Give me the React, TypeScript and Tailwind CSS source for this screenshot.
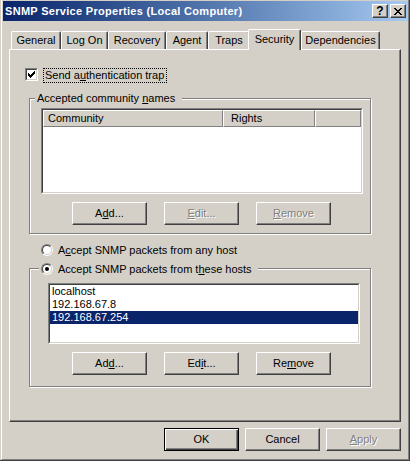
import React from 'react';

type BtnProps = {
  children: React.ReactNode;
  disabled?: boolean;
  isDefault?: boolean;
};

function PushButton({ children, disabled = false, isDefault = false }: BtnProps) {
  const edge = isDefault
    ? 'border border-black shadow-[inset_1px_1px_0_#ffffff,inset_-1px_-1px_0_#404040,inset_-2px_-2px_0_#808080]'
    : 'border border-t-white border-l-white border-r-[#404040] border-b-[#404040] shadow-[inset_-1px_-1px_0_#808080]';
  const text = disabled ? 'text-[#808080] [text-shadow:1px_1px_0_#ffffff]' : 'text-black';
  return (
    <div className={`w-[75px] h-[23px] flex items-center justify-center bg-[#d4d0c8] ${edge} ${text}`}>
      <span>{children}</span>
    </div>
  );
}

function CaptionButton({ children }: { children: React.ReactNode }) {
  return (
    <div className="w-[16px] h-[14px] flex items-center justify-center bg-[#d4d0c8] border border-t-white border-l-white border-r-[#404040] border-b-[#404040] shadow-[inset_-1px_-1px_0_#808080]">
      {children}
    </div>
  );
}

function CloseGlyph() {
  // 8x7 pixel cross like the Marlett glyph
  const px: [number, number][] = [
    [0, 0], [1, 0], [6, 0], [7, 0],
    [1, 1], [2, 1], [5, 1], [6, 1],
    [2, 2], [3, 2], [4, 2], [5, 2],
    [3, 3], [4, 3],
    [2, 4], [3, 4], [4, 4], [5, 4],
    [1, 5], [2, 5], [5, 5], [6, 5],
    [0, 6], [1, 6], [6, 6], [7, 6],
  ];
  return (
    <svg width="8" height="7" viewBox="0 0 8 7" shapeRendering="crispEdges">
      {px.map(([x, y]) => (
        <rect key={`${x}-${y}`} x={x} y={y} width="1" height="1" fill="#000" />
      ))}
    </svg>
  );
}

function TitleBar() {
  return (
    <div className="h-[20px] flex items-center pl-[2px] pr-[2px] bg-linear-to-r from-[#0a246a] to-[#a6caf0]">
      <div className="flex-1 text-white font-bold text-[11px] leading-[13px] tracking-[0.3px] whitespace-nowrap">
        SNMP Service Properties (Local Computer)
      </div>
      <div className="flex gap-[2px]">
        <CaptionButton>
          <span className="font-bold text-[12px] leading-[12px] -mt-[1px]">?</span>
        </CaptionButton>
        <CaptionButton>
          <CloseGlyph />
        </CaptionButton>
      </div>
    </div>
  );
}

const tabs = [
  { label: 'General', w: 'w-[50px]' },
  { label: 'Log On', w: 'w-[47px]' },
  { label: 'Recovery', w: 'w-[58px]' },
  { label: 'Agent', w: 'w-[42px]' },
  { label: 'Traps', w: 'w-[42px]' },
  { label: 'Security', w: 'w-[53px]', selected: true },
  { label: 'Dependencies', w: 'w-[79px]' },
];

function TabStrip() {
  return (
    <div className="h-[20px] mt-[8px] pl-[2px] flex items-end">
      {tabs.map((t) =>
        t.selected ? (
          <div
            key={t.label}
            className={`${t.w} h-[21px] -ml-[2px] -mb-[1px] pb-[2px] relative z-10 flex items-center justify-center bg-[#d4d0c8] rounded-t-[2px] border-l border-t border-r border-l-white border-t-white border-r-[#404040] shadow-[inset_-1px_0_0_#808080]`}
          >
            {t.label}
          </div>
        ) : (
          <div
            key={t.label}
            className={`${t.w} h-[18px] flex items-center justify-center rounded-t-[2px] border-l border-t border-r border-l-white border-t-white border-r-[#404040] shadow-[inset_-1px_0_0_#808080]`}
          >
            {t.label}
          </div>
        )
      )}
    </div>
  );
}

function CheckBox() {
  const cols: [number, number][] = [
    [0, 2], [1, 3], [2, 4], [3, 3], [4, 2], [5, 1], [6, 0],
  ];
  return (
    <div className="w-[13px] h-[13px] border border-t-[#808080] border-l-[#808080] border-r-white border-b-white">
      <div className="w-full h-full bg-white border border-t-[#404040] border-l-[#404040] border-r-[#d4d0c8] border-b-[#d4d0c8] flex items-center justify-center">
        <svg width="7" height="7" viewBox="0 0 7 7" shapeRendering="crispEdges">
          {cols.map(([x, y]) => (
            <rect key={x} x={x} y={y} width="1" height="3" fill="#000" />
          ))}
        </svg>
      </div>
    </div>
  );
}

function Radio({ checked = false }: { checked?: boolean }) {
  return (
    <div className="w-[12px] h-[12px] rounded-full border border-t-[#808080] border-l-[#808080] border-r-white border-b-white">
      <div className="w-full h-full rounded-full bg-white border border-t-[#404040] border-l-[#404040] border-r-[#d4d0c8] border-b-[#d4d0c8] flex items-center justify-center">
        {checked && <div className="w-[4px] h-[4px] rounded-full bg-black" />}
      </div>
    </div>
  );
}

function CommunityList() {
  return (
    <div className="ml-[11px] mt-[9px] w-[322px] h-[86px] border border-t-[#808080] border-l-[#808080] border-r-white border-b-white">
      <div className="w-full h-full bg-white border border-t-[#404040] border-l-[#404040] border-r-[#d4d0c8] border-b-[#d4d0c8]">
        <div className="h-[17px] flex bg-[#d4d0c8]">
          <div className="w-[180px] pl-[4px] flex items-center border border-t-white border-l-white border-r-[#808080] border-b-[#808080]">
            Community
          </div>
          <div className="w-[92px] pl-[7px] flex items-center border border-t-white border-l-white border-r-[#808080] border-b-[#808080]">
            Rights
          </div>
          <div className="flex-1 border border-t-white border-l-white border-r-[#808080] border-b-[#808080]" />
        </div>
      </div>
    </div>
  );
}

const hosts = ['localhost', '192.168.67.8', '192.168.67.254'];

function HostList() {
  return (
    <div className="ml-[18px] mt-[14px] w-[312px] h-[61px] border border-t-[#808080] border-l-[#808080] border-r-white border-b-white">
      <div className="w-full h-full bg-white border border-t-[#404040] border-l-[#404040] border-r-[#d4d0c8] border-b-[#d4d0c8]">
        {hosts.map((h, i) => (
          <div
            key={h}
            className={`h-[13px] pl-[2px] whitespace-nowrap ${i === 2 ? 'bg-[#0a246a] text-white' : 'text-black'}`}
          >
            {h}
          </div>
        ))}
      </div>
    </div>
  );
}

function TabPage() {
  return (
    <div className="w-[392px] h-[373px] flex flex-col items-start border border-t-white border-l-white border-r-[#404040] border-b-[#404040] shadow-[inset_-1px_-1px_0_#808080]">
      {/* Send authentication trap */}
      <div className="mt-[18px] ml-[15px] flex items-start">
        <CheckBox />
        <div className="ml-[5px] h-[15px] pl-[1px] pr-[2px] flex items-center border border-dotted border-black">
          <span>
            Send a<u>u</u>thentication trap
          </span>
        </div>
      </div>

      {/* Accepted community names */}
      <div className="relative mt-[15px] ml-[19px] w-[342px] h-[136px] border border-[#808080] shadow-[inset_1px_1px_0_#ffffff,1px_1px_0_#ffffff]">
        <div className="absolute -top-[7px] left-[5px] pl-[2px] pr-[7px] bg-[#d4d0c8] whitespace-nowrap">
          Accepted community <u>n</u>ames
        </div>
        <CommunityList />
        <div className="mt-[8px] ml-[42px] flex gap-[17px]">
          <PushButton>
            A<u>d</u>d...
          </PushButton>
          <PushButton disabled>
            <u>E</u>dit...
          </PushButton>
          <PushButton disabled>
            <u>R</u>emove
          </PushButton>
        </div>
      </div>

      {/* Any host */}
      <div className="mt-[9px] ml-[31px] h-[14px] flex items-center gap-[5px]">
        <Radio />
        <span className="whitespace-nowrap">
          A<u>c</u>cept SNMP packets from any host
        </span>
      </div>

      {/* These hosts */}
      <div className="relative mt-[11px] ml-[19px] w-[342px] h-[119px] border border-[#808080] shadow-[inset_1px_1px_0_#ffffff,1px_1px_0_#ffffff]">
        <div className="absolute -top-[7px] left-[9px] h-[14px] pl-[2px] pr-[6px] flex items-center gap-[5px] bg-[#d4d0c8]">
          <Radio checked />
          <span className="whitespace-nowrap">
            Accept SNMP packets from t<u>h</u>ese hosts
          </span>
        </div>
        <HostList />
        <div className="mt-[8px] ml-[42px] flex gap-[17px]">
          <PushButton>
            Ad<u>d</u>...
          </PushButton>
          <PushButton>
            Ed<u>i</u>t...
          </PushButton>
          <PushButton>
            Re<u>m</u>ove
          </PushButton>
        </div>
      </div>
    </div>
  );
}

export default function App() {
  return (
    <div className="w-[410px] h-[461px] bg-[#d4d0c8] border-r border-b border-[#404040] font-['Liberation_Sans',Arial,sans-serif] text-[11px] leading-[13px] text-black select-none">
      <div className="h-full ml-[1px] pt-[1px] pl-[1px] border-l border-r border-b border-l-white border-r-[#808080] border-b-[#808080]">
        <TitleBar />
        <div className="pl-[6px]">
          <TabStrip />
          <TabPage />
          <div className="w-[392px] mt-[6px] flex justify-end gap-[6px]">
            <PushButton isDefault>OK</PushButton>
            <PushButton>Cancel</PushButton>
            <PushButton disabled>
              <u>A</u>pply
            </PushButton>
          </div>
        </div>
      </div>
    </div>
  );
}
